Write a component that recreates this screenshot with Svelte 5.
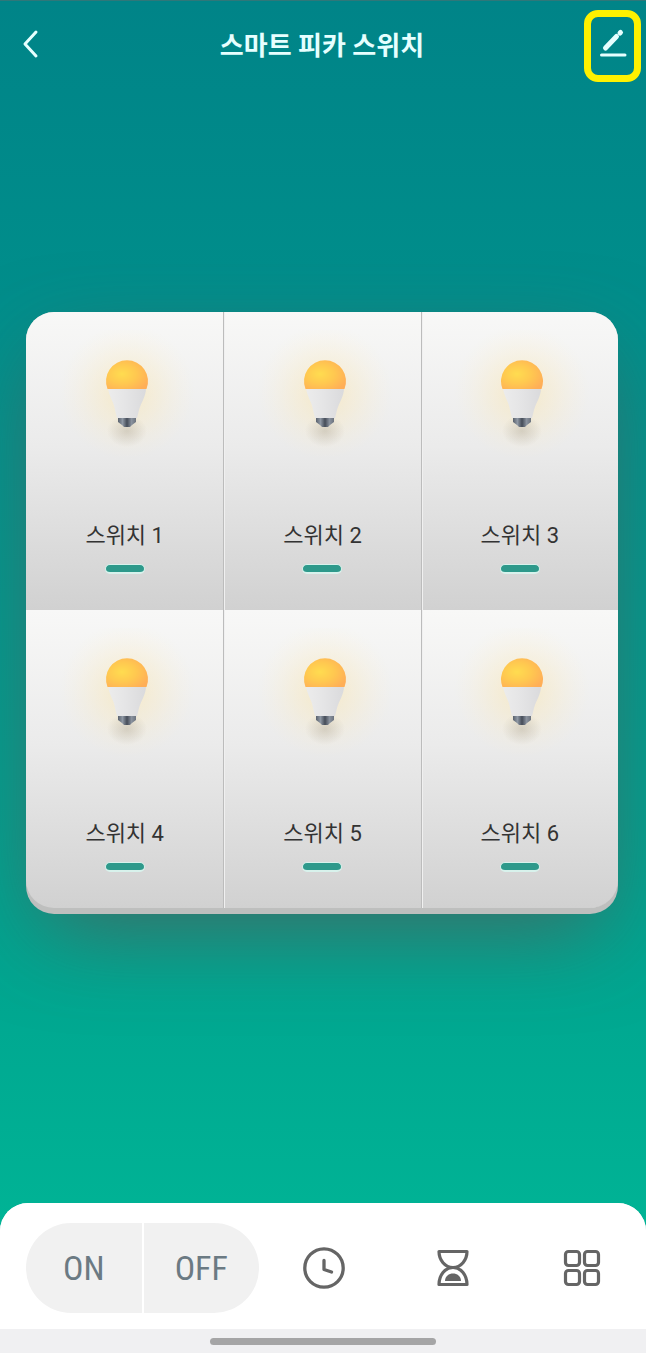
<script lang="ts">
  type Switch = { id: number; name: string; on: boolean };

  let switches = $state<Switch[]>(
    [1, 2, 3, 4, 5, 6].map((id) => ({ id, name: `스위치 ${id}`, on: true })),
  );

  function setAll(on: boolean) {
    switches.forEach((s) => (s.on = on));
  }
</script>

<!-- shared gradients for the bulbs -->
<svg class="defs" width="0" height="0" aria-hidden="true">
  <defs>
    <radialGradient id="dome" cx="0.38" cy="0.48" r="0.68">
      <stop offset="0" stop-color="#ffdc50" />
      <stop offset="0.5" stop-color="#ffc850" />
      <stop offset="1" stop-color="#ffae57" />
    </radialGradient>
    <radialGradient id="glow">
      <stop offset="0" stop-color="#ffdc82" stop-opacity="0.38" />
      <stop offset="0.5" stop-color="#ffe6a5" stop-opacity="0.22" />
      <stop offset="1" stop-color="#ffefc8" stop-opacity="0" />
    </radialGradient>
    <radialGradient id="shade">
      <stop offset="0" stop-color="#968c78" stop-opacity="0.3" />
      <stop offset="1" stop-color="#968c78" stop-opacity="0" />
    </radialGradient>
    <linearGradient id="body">
      <stop offset="0" stop-color="#ececec" />
      <stop offset="0.4" stop-color="#e6e6e7" />
      <stop offset="1" stop-color="#dadadc" />
    </linearGradient>
    <linearGradient id="cap">
      <stop offset="0" stop-color="#59616d" />
      <stop offset="0.25" stop-color="#8f98a4" />
      <stop offset="0.5" stop-color="#454c58" />
      <stop offset="0.75" stop-color="#8a929e" />
      <stop offset="1" stop-color="#6c737e" />
    </linearGradient>
  </defs>
</svg>

<div class="page">
  <header>
    <button type="button" class="back" aria-label="뒤로">
      <svg width="18" height="30" viewBox="0 0 18 30">
        <path d="M15 3 L4 15 L15 27" />
      </svg>
    </button>
    <h1>스마트 피카 스위치</h1>
    <button type="button" class="edit" aria-label="편집">
      <svg width="30" height="30" viewBox="0 0 30 30">
        <path d="M8.500 20 L19.500 8.500" stroke-width="5" />
        <path d="M23 5 L23.500 4.500" stroke-width="5" />
        <path d="M4.500 27 H28" stroke-width="3" />
      </svg>
    </button>
  </header>

  <main>
    <div class="panel">
      {#each switches as s (s.id)}
        <button type="button" class="switch" aria-pressed={s.on} onclick={() => (s.on = !s.on)}>
          <svg class="bulb" class:off={!s.on} viewBox="0 0 140 140">
            <circle class="glow" cx="70" cy="62" r="68" fill="url(#glow)" />
            <ellipse cx="70" cy="101" rx="20" ry="16" fill="url(#shade)" />
            <path d="M51 58 H89 C89 67 84 72 82 80 L80 88 H60 L58 80 C57 72 52 67 51 58 Z" fill="url(#body)" />
            <path d="M61 88 H79 V92 L75 95 L73 97 H67 L65 95 L61 92 Z" fill="url(#cap)" />
            <path class="dome" d="M50.500 59 A21 21 0 1 1 89.500 59 Z" fill="url(#dome)" />
          </svg>
          <span class="name">{s.name}</span>
          <span class="lamp" class:off={!s.on}></span>
        </button>
      {/each}
    </div>
  </main>

  <footer>
    <div class="bar">
      <div class="all">
        <button type="button" onclick={() => setAll(true)}>ON</button>
        <button type="button" onclick={() => setAll(false)}>OFF</button>
      </div>
      <button type="button" class="tool" aria-label="예약">
        <svg width="44" height="44" viewBox="0 0 44 44">
          <circle cx="22" cy="22" r="19.200" stroke-width="3.300" />
          <path d="M22 14.500 V23.500 L29.500 26" stroke-width="3.300" />
        </svg>
      </button>
      <button type="button" class="tool" aria-label="타이머">
        <svg width="44" height="44" viewBox="0 0 44 44">
          <path d="M8 5.500 H36 C36 14 30 21.500 22 21.500 C14 21.500 8 14 8 5.500 Z" stroke-width="3.200" />
          <path d="M8 38.500 H36 C36 29 30 21.500 22 21.500 C14 21.500 8 29 8 38.500 Z" stroke-width="3.200" />
          <path class="sand" d="M14 35 C14 30 18 27.500 22 27.500 C26 27.500 30 30 30 35 Z" />
        </svg>
      </button>
      <button type="button" class="tool" aria-label="더보기">
        <svg width="44" height="44" viewBox="0 0 44 44">
          <rect x="5.500" y="5.500" width="14" height="14" rx="3" stroke-width="3.200" />
          <rect x="24.500" y="5.500" width="14" height="14" rx="3" stroke-width="3.200" />
          <rect x="5.500" y="24.500" width="14" height="14" rx="3" stroke-width="3.200" />
          <rect x="24.500" y="24.500" width="14" height="14" rx="3" stroke-width="3.200" />
        </svg>
      </button>
    </div>
    <div class="home"><span></span></div>
  </footer>
</div>

<style>
  :global(body) {
    margin: 0;
  }
  .defs {
    position: absolute;
  }
  .page {
    min-height: 100vh;
    display: flex;
    flex-direction: column;
    box-sizing: border-box;
    border-top: 1px solid #2f7779;
    background: linear-gradient(#008488, #008e8b 22%, #00a38f 68%, #00b395 90%);
    font-family: Roboto, 'Noto Sans CJK KR', sans-serif;
  }
  button {
    padding: 0;
    border: 0;
    background: none;
    color: inherit;
    font: inherit;
    cursor: pointer;
  }
  svg {
    display: block;
  }
  header {
    display: flex;
    align-items: center;
    justify-content: space-between;
    height: 90px;
    padding: 0 5px 0 0;
    color: #e6ffff;
  }
  header path,
  .tool svg {
    fill: none;
    stroke: currentColor;
    stroke-linecap: round;
    stroke-linejoin: round;
  }
  .back {
    display: flex;
    align-items: center;
    width: 60px;
    height: 72px;
    padding: 0 0 4px 21px;
    box-sizing: border-box;
  }
  .back path {
    stroke-width: 3;
  }
  h1 {
    margin: 0;
    font-size: 26px;
    line-height: 36px;
    font-weight: 700;
  }
  .edit {
    display: flex;
    align-items: center;
    justify-content: center;
    width: 57px;
    height: 72px;
    padding-bottom: 6px;
    box-sizing: border-box;
    border: 7px solid #fff100;
    border-radius: 14px;
  }
  main {
    flex: 1;
    display: flex;
    align-items: center;
    padding: 24px 28px 92px 26px;
  }
  .panel {
    flex: 1;
    display: grid;
    grid-template-columns: repeat(3, 1fr);
    padding-bottom: 6px;
    border-radius: 28px;
    background: #bebfbe;
    box-shadow: 0 30px 90px -16px rgba(100, 78, 80, 0.65);
  }
  .switch {
    display: flex;
    flex-direction: column;
    align-items: center;
    padding: 12px 0 36px;
    border-left: 1px solid #bcbcbc;
    background: linear-gradient(#f8f8f7, #ebebeb 45%, #d1d1d1);
    box-shadow: inset 1px 0 #f0f0f0;
  }
  .switch:nth-child(3n + 1) {
    border-left: 0;
    box-shadow: none;
  }
  .switch:nth-child(1) {
    border-top-left-radius: 28px;
  }
  .switch:nth-child(3) {
    border-top-right-radius: 28px;
  }
  .switch:nth-child(4) {
    border-bottom-left-radius: 28px;
  }
  .switch:nth-child(6) {
    border-bottom-right-radius: 28px;
  }
  .bulb {
    width: 140px;
    margin: 6px 0 50px 5px;
  }
  .bulb.off .glow {
    display: none;
  }
  .bulb.off .dome {
    fill: #e2e2e2;
  }
  .name {
    font-size: 22px;
    line-height: 32px;
    color: #333;
  }
  .lamp {
    width: 38px;
    height: 7px;
    margin-top: 12px;
    border: 1px solid #d8f2ec;
    border-bottom-width: 2px;
    border-radius: 6px;
    background: #2e998b;
  }
  .lamp.off {
    background: #b5b5b5;
  }
  footer {
    border-radius: 28px 28px 0 0;
    background: #f0f0f2;
  }
  .bar {
    display: flex;
    align-items: center;
    padding: 20px 0 16px 26px;
    border-radius: 28px 28px 0 0;
    background: #fff;
  }
  .all {
    flex: 233;
    display: flex;
    gap: 2px;
    height: 90px;
    border-radius: 45px;
    overflow: hidden;
  }
  .all button {
    flex: 1;
    background: #f1f1f1;
    color: #6b7a83;
    font-family: 'Roboto Condensed', 'Liberation Sans Narrow', 'DejaVu Sans Condensed', sans-serif;
    font-size: 34px;
  }
  .tool {
    flex: 129;
    display: flex;
    justify-content: center;
    color: #656565;
  }
  .sand {
    fill: currentColor;
    stroke: none;
  }
  .home {
    display: flex;
    justify-content: center;
    padding: 9px 0 8px;
  }
  .home span {
    width: 35%;
    height: 7px;
    border-radius: 4px;
    background: #a5a5a6;
  }
</style>
